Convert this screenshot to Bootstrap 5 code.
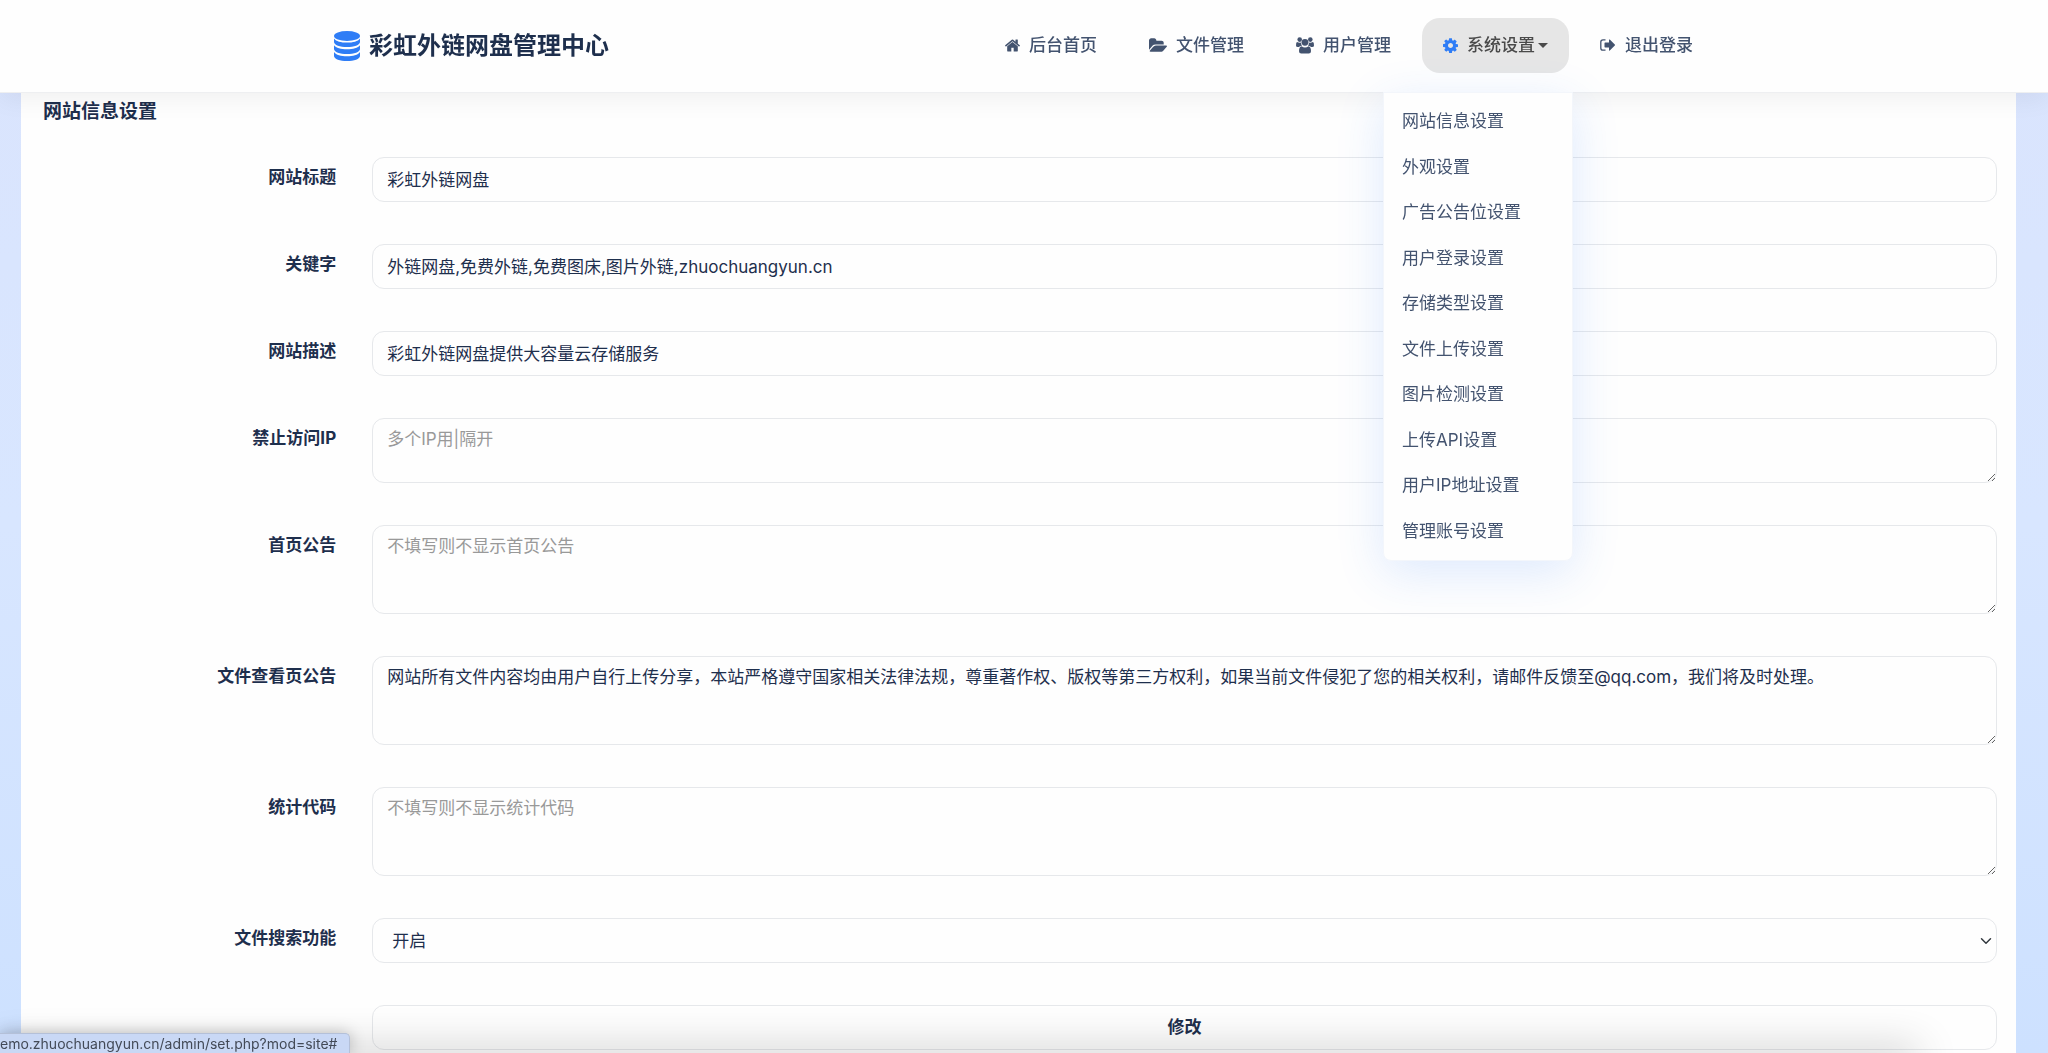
<!DOCTYPE html>
<html lang="zh-CN">
<head>
<meta charset="utf-8">
<meta name="viewport" content="width=device-width, initial-scale=1">
<title>网站信息设置</title>
<link rel="stylesheet" href="https://cdn.jsdelivr.net/npm/bootstrap@5.3.0/dist/css/bootstrap.min.css">
<style>
:root { --ink: #1e2f4d; --nav-ink: #43536f; --line: #e6e8eb; --accent: #2f7df6; }
body {
  font-family: Inter, "Noto Sans CJK SC", sans-serif;
  font-size: 17px; line-height: 24px; color: var(--ink);
  background: linear-gradient(180deg, #dae4fd 0%, #d8e6ff 50%, #cde1ff 100%);
}
.site-header { background: #fefefe; border-bottom: 1px solid #eeeff1; box-shadow: 0 6px 24px rgba(0,0,0,.06); height: 93px; padding: 0 0 2px; }
.header-inner { max-width: 1380px; padding: 0; }
.navbar-brand { font-size: 24px; line-height: 36px; font-weight: 700; color: var(--ink); gap: 9px; padding: 2px 0 0; margin: 0; }
.site-header .navbar-nav { gap: 10px; }
.site-header .nav-link {
  display: flex; align-items: center; gap: 9px; height: 55px;
  padding: 0 21px !important; border-radius: 18px; border: 0;
  font-weight: 500; color: var(--nav-ink);
}
.site-header .nav-link.show { background: #e6e6e6; color: #4a4a4a; }
.site-header .nav-link.show svg { color: var(--accent); }
.dropdown-toggle::after { margin-left: -6px; }
.site-header .dropdown-menu.show {
  display: flex; flex-direction: column; top: 74px; right: -4px; left: auto;
  width: 190px; height: 469px; margin: 0; padding: 6px 0;
  border: 1px solid #f3f6fb; border-radius: 0 0 8px 8px; background: #fefefe;
  box-shadow: 0 12px 48px rgba(47,125,246,.16);
}
.dropdown-item { flex: 1; display: flex; align-items: center; padding: 0 18px; color: var(--nav-ink); font-size: 17px; }
.settings-card { margin: 0 32px 0 21px; padding-bottom: 32px; border: 1px solid #fefefe; border-radius: 0; background: #fefefe; color: var(--ink); }
.card-title { font-size: 19px; line-height: 28px; font-weight: 700; margin: 0; padding: 4px 21px 31px; }
.settings-form { display: flex; flex-direction: column; gap: 42px; }
.settings-form .row { --bs-gutter-x: 36px; margin: 0; }
.field-label { font-weight: 700; padding-top: 8px; text-align: right; }
.form-control, .form-select {
  min-height: 45px; padding: 8px 14px; font-size: 17px; line-height: 24px; color: var(--ink);
  border: 1px solid var(--line); border-radius: 12px; background-color: #fefefe;
}
.form-control::placeholder { color: #999; }
textarea.form-control { display: block; height: 89px; }
textarea.short-box.form-control { height: 65px; }
.form-select { padding-left: 19px; background-size: 12px 12px; background-position: right 4px center; }
.save-btn { height: 45px; border: 1px solid var(--line); border-radius: 12px; font-size: 17px; font-weight: 700; color: var(--ink); background: #fefefe; }
.status-bar {
  position: fixed; left: 0; bottom: 0; z-index: 1040; height: 20px; padding: 0 10px 0 0;
  font-size: 14px; line-height: 20px; color: #434a57; white-space: nowrap; min-width: 350px;
  background: #c9d8f5; border-top: 1px solid #b4c0d8; border-right: 1px solid #b4c0d8; border-radius: 0 5px 0 0;
  box-shadow: 0 0 16px rgba(0,0,0,.25);
}
.bottom-shade { position: fixed; left: 0; right: 130px; bottom: -10px; height: 10px; z-index: 1035; box-shadow: 0 0 40px rgba(0,0,0,.45); pointer-events: none; }
</style>
<script src="https://cdn.jsdelivr.net/npm/bootstrap@5.3.0/dist/js/bootstrap.bundle.min.js"></script>
</head>
<body class="vh-100 overflow-hidden">
<header class="navbar navbar-expand-lg site-header sticky-top">
  <div class="container-fluid header-inner">
    <a class="navbar-brand d-flex align-items-center" href="#">
      <svg width="26" height="30" viewBox="0 0 26 30" fill="#2f7df6" aria-hidden="true">
        <ellipse cx="13" cy="5" rx="13" ry="5"/>
        <path d="M0 7.500C2 10.500 7 11.600 13 11.600S24 10.500 26 7.500V11c0 3-6 5-13 5S0 14 0 11z"/>
        <path d="M0 14.200C2 17 7 18.300 13 18.300S24 17 26 14.200V18c0 3-6 5-13 5S0 21 0 18z"/>
        <path d="M0 21C2 24 7 25.200 13 25.200S24 24 26 21v4c0 3-6 5-13 5S0 28 0 25z"/>
      </svg>
      <span>彩虹外链网盘管理中心</span>
    </a>
    <nav aria-label="主导航">
      <ul class="navbar-nav">
        <li class="nav-item"><a class="nav-link" href="#">
          <svg width="15" height="13" viewBox="20 250 1625 1290" fill="currentColor" aria-hidden="true"><path d="M1408 992v480q0 26-19 45t-45 19H960v-384H704v384H320q-26 0-45-19t-19-45V992q0-1 .5-3t.5-3l575-474 575 474q1 2 1 6zm223-69l-62 74q-8 9-21 11h-3q-13 0-21-7L832 424 140 1001q-12 8-24 7-13-2-21-11l-62-74q-8-10-7-23.500t11-21.500l719-599q32-26 76-26t76 26l244 204V288q0-14 9-23t23-9h192q14 0 23 9t9 23v408l219 182q10 8 11 21.500t-7 23.500z"/></svg>
          后台首页</a></li>
        <li class="nav-item"><a class="nav-link" href="#">
          <svg width="18" height="14" viewBox="-64 128 1880 1408" fill="currentColor" aria-hidden="true"><path d="M1815 952q0 31-31 66l-336 396q-43 51-120.500 86.500T1184 1536H96q-34 0-60.500-13T9 1480q0-31 31-66l336-396q43-51 120.500-86.500T640 896h1088q34 0 60.500 13t26.500 43zM1472 608v160H640q-94 0-197 47.500T279 934L-58 1330l-5 6q0-4-.5-12.500T-64 1311V352q0-92 66-158t158-66h320q92 0 158 66t66 158v32h544q92 0 158 66t66 158z"/></svg>
          文件管理</a></li>
        <li class="nav-item"><a class="nav-link" href="#">
          <svg width="18" height="17" viewBox="0 0 18 17" fill="currentColor" aria-hidden="true"><circle cx="3.700" cy="2.600" r="2.300"/><circle cx="14.300" cy="2.600" r="2.300"/><circle cx="9" cy="5.300" r="3.400"/><path d="M1 5q2.500 1 4 .4 0 2 1 3.400-2 .1-3 1.200H1.800Q0 10 0 8.400 0 5.200 1 5zM17 5q-2.500 1-4 .4 0 2-1 3.400 2 .1 3 1.200h1.200Q18 10 18 8.400 18 5.200 17 5zM5.500 9.200Q9 11.800 12.500 9.200q2.500.4 2.500 5 0 2.400-2.300 2.400H5.300Q3 16.600 3 14.200q0-4.600 2.500-5z"/></svg>
          用户管理</a></li>
        <li class="nav-item dropdown"><a class="nav-link dropdown-toggle show" href="#" role="button" data-bs-toggle="dropdown" aria-expanded="true">
          <svg width="15" height="15" viewBox="128 128 1536 1536" fill="currentColor" aria-hidden="true"><path d="M1152 896q0-106-75-181t-181-75-181 75-75 181 75 181 181 75 181-75 75-181zm512-109v222q0 12-8 23t-20 13l-185 28q-19 54-39 91 35 50 107 138 10 12 10 25t-9 23q-27 37-99 108t-94 71q-12 0-26-9l-138-108q-44 23-91 38-16 136-29 186-7 28-36 28H785q-14 0-24.500-8.500T749 1635l-28-184q-49-16-90-37l-141 107q-10 9-25 9-14 0-25-11-126-114-165-168-7-10-7-23 0-12 8-23 15-21 51-66.500t54-70.500q-27-50-41-99l-183-27q-13-2-21-12.500t-8-23.500V783q0-12 8-23t19-13l186-28q14-46 39-92-40-57-107-138-10-12-10-24 0-10 9-23 26-36 98.500-107.500T465 286q13 0 26 10l138 107q44-23 91-38 16-136 29-186 7-28 36-28h222q14 0 24.500 8.500T1043 181l28 184q49 16 90 37l142-107q9-9 24-9 13 0 25 10 129 119 165 170 7 8 7 22 0 12-8 23-15 21-51 66.500t-54 70.500q26 50 41 98l183 28q13 2 21 12.500t8 23.500z"/></svg>
          系统设置</a>
          <div class="dropdown-menu show">
            <a class="dropdown-item" href="#">网站信息设置</a>
            <a class="dropdown-item" href="#">外观设置</a>
            <a class="dropdown-item" href="#">广告公告位设置</a>
            <a class="dropdown-item" href="#">用户登录设置</a>
            <a class="dropdown-item" href="#">存储类型设置</a>
            <a class="dropdown-item" href="#">文件上传设置</a>
            <a class="dropdown-item" href="#">图片检测设置</a>
            <a class="dropdown-item" href="#">上传API设置</a>
            <a class="dropdown-item" href="#">用户IP地址设置</a>
            <a class="dropdown-item" href="#">管理账号设置</a>
          </div>
        </li>
        <li class="nav-item"><a class="nav-link" href="#">
          <svg width="16" height="12" viewBox="0 0 16 12" aria-hidden="true"><path d="M5.500.8H3Q.8.8.8 3v6q0 2.200 2.200 2.200h2.500" fill="none" stroke="currentColor" stroke-width="1.300"/><path d="M4.500 4.200q0-.6.600-.6H9V1q0-1 .8-.4l5 4.800q.5.600 0 1.200l-5 4.800Q9 12 9 11V8.400H5.100q-.6 0-.6-.6z" fill="currentColor"/></svg>
          退出登录</a></li>
      </ul>
    </nav>
  </div>
</header>
<main class="card settings-card">
  <h1 class="card-title">网站信息设置</h1>
  <form class="settings-form">
    <div class="row">
      <label class="col-2 field-label" for="title">网站标题</label>
      <div class="col-10"><input class="form-control" id="title" type="text" value="彩虹外链网盘"></div>
    </div>
    <div class="row">
      <label class="col-2 field-label" for="keywords">关键字</label>
      <div class="col-10"><input class="form-control" id="keywords" type="text" value="外链网盘,免费外链,免费图床,图片外链,zhuochuangyun.cn"></div>
    </div>
    <div class="row">
      <label class="col-2 field-label" for="description">网站描述</label>
      <div class="col-10"><input class="form-control" id="description" type="text" value="彩虹外链网盘提供大容量云存储服务"></div>
    </div>
    <div class="row">
      <label class="col-2 field-label" for="blackip">禁止访问IP</label>
      <div class="col-10"><textarea class="form-control short-box" id="blackip" placeholder="多个IP用|隔开"></textarea></div>
    </div>
    <div class="row">
      <label class="col-2 field-label" for="gg-index">首页公告</label>
      <div class="col-10"><textarea class="form-control" id="gg-index" placeholder="不填写则不显示首页公告"></textarea></div>
    </div>
    <div class="row">
      <label class="col-2 field-label" for="gg-file">文件查看页公告</label>
      <div class="col-10"><textarea class="form-control" id="gg-file">网站所有文件内容均由用户自行上传分享，本站严格遵守国家相关法律法规，尊重著作权、版权等第三方权利，如果当前文件侵犯了您的相关权利，请邮件反馈至@qq.com，我们将及时处理。</textarea></div>
    </div>
    <div class="row">
      <label class="col-2 field-label" for="stat-code">统计代码</label>
      <div class="col-10"><textarea class="form-control" id="stat-code" placeholder="不填写则不显示统计代码"></textarea></div>
    </div>
    <div class="row">
      <label class="col-2 field-label" for="file-search">文件搜索功能</label>
      <div class="col-10"><select class="form-select" id="file-search"><option>开启</option><option>关闭</option></select></div>
    </div>
    <div class="row">
      <div class="col-10 offset-2"><button class="btn save-btn w-100" type="submit">修改</button></div>
    </div>
  </form>
</main>
<div class="bottom-shade"></div>
<div class="status-bar">emo.zhuochuangyun.cn/admin/set.php?mod=site#</div>
</body>
</html>
